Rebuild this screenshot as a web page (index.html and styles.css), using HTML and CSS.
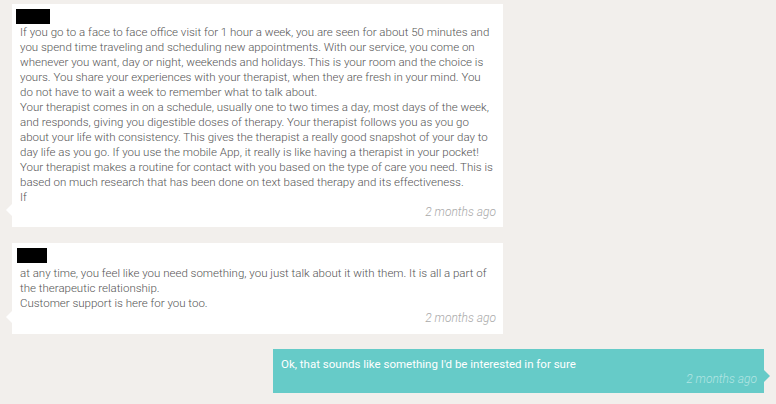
FILE: index.html
```html
<!DOCTYPE html>
<html>
<head>
<meta charset="utf-8">
<link rel="stylesheet" href="styles.css">
</head>
<body>
<div class="chat">
  <div class="msg msg-in msg-first">
    <div class="name"></div>
    <div class="text">If you go to a face to face office visit for 1 hour a week, you are seen for about 50 minutes and you spend time traveling and scheduling new appointments. With our service, you come on whenever you want, day or night, weekends and holidays. This is your room and the choice is yours. You share your experiences with your therapist, when they are fresh in your mind. You do not have to wait a week to remember what to talk about.<br>Your therapist comes in on a schedule, usually one to two times a day, most days of the week, and responds, giving you digestible doses of therapy. Your therapist follows you as you go about your life with consistency. This gives the therapist a really good snapshot of your day to day life as you go. If you use the mobile App, it really is like having a therapist in your pocket!<br>Your therapist makes a routine for contact with you based on the type of care you need. This is based on much research that has been done on text based therapy and its effectiveness.<br>If</div>
    <div class="time">2 months ago</div>
  </div>
  <div class="msg msg-in msg-second">
    <div class="name name-short"></div>
    <div class="text">at any time, you feel like you need something, you just talk about it with them. It is all a part of the therapeutic relationship.<br>Customer support is here for you too.</div>
    <div class="time">2 months ago</div>
  </div>
  <div class="msg msg-out">
    <div class="text">Ok, that sounds like something I'd be interested in for sure</div>
    <div class="time">2 months ago</div>
  </div>
</div>
</body>
</html>
```
FILE: styles.css
```css
html, body {
  margin: 0;
  padding: 0;
  background: #f2efec;
}
body {
  font-family: Roboto, "Liberation Sans", sans-serif;
  font-weight: 300;
}
.chat {
  display: flex;
  flex-direction: column;
  gap: 15px;
  padding: 4px 12px 0 12px;
}
.msg {
  position: relative;
  width: 491px;
  box-sizing: border-box;
  padding: 5px 7px 7px 8px;
}
.msg-in {
  background: #ffffff;
  align-self: flex-start;
}
.msg-in::before {
  content: "";
  position: absolute;
  left: -6px;
  bottom: 11px;
  border-top: 6px solid transparent;
  border-bottom: 6px solid transparent;
  border-right: 6px solid #ffffff;
}
.msg-second {
  margin-top: 1px;
  padding-bottom: 8px;
}
.msg-second .text {
  margin-top: 3px;
}
.msg-out {
  background: #66cbc8;
  align-self: flex-end;
  padding-top: 8px;
  padding-bottom: 6px;
}
.msg-out::after {
  content: "";
  position: absolute;
  right: -6px;
  bottom: 11px;
  border-top: 6px solid transparent;
  border-bottom: 6px solid transparent;
  border-left: 6px solid #66cbc8;
}
.name {
  width: 34px;
  height: 15px;
  background: #000;
  margin-left: -4px;
}
.name-short {
  width: 30px;
  margin-left: -3px;
}
.text {
  font-size: 11.5px;
  line-height: 15px;
  color: #555;
  margin-top: 1px;
}
.msg-out .text {
  color: #fff;
  font-weight: 400;
  margin-top: 0;
}
.time {
  font-size: 12px;
  line-height: 15px;
  font-style: italic;
  color: #a9a9a9;
  text-align: right;
}
.msg-out .time {
  color: #b3e5e3;
}
```
